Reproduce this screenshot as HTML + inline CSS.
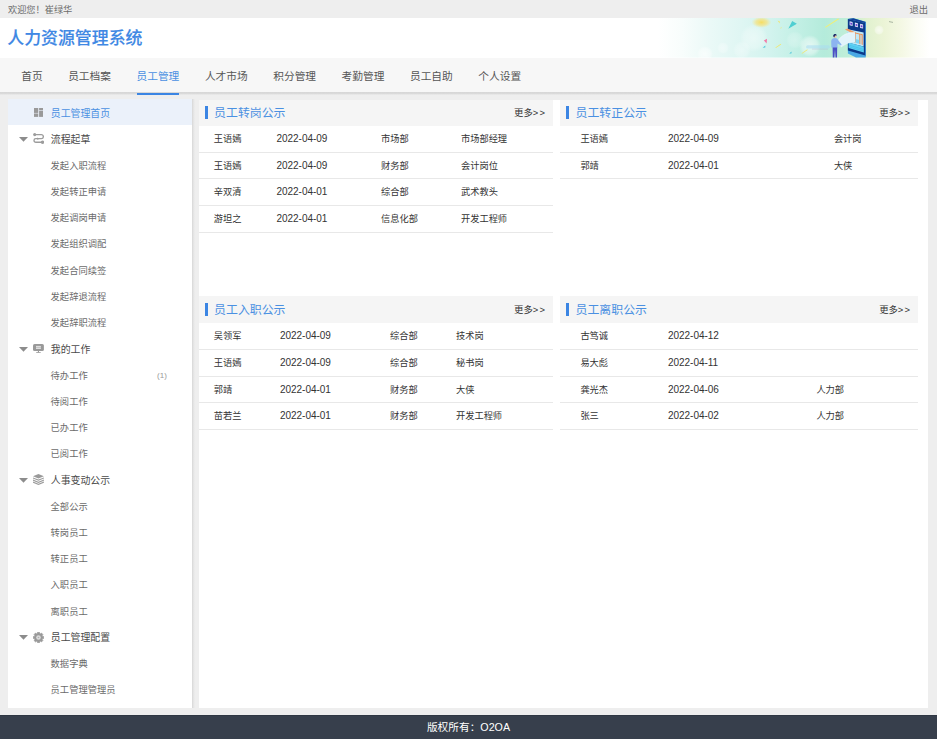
<!DOCTYPE html>
<html lang="zh-CN"><head><meta charset="utf-8"><title>人力资源管理系统</title>
<style>
html,body{margin:0;padding:0}
body{width:937px;height:739px;overflow:hidden;background:#eeeeee;position:relative;font-family:"Liberation Sans", "Noto Sans CJK SC", sans-serif;color:#333}
#top{position:absolute;left:0;top:0;width:937px;height:18px;background:#eeeeee;font-size:9.3px;line-height:18px;color:#6c6c6c}
#top .l{position:absolute;left:8px;top:1.1px;font-size:9.2px}
#top .r{position:absolute;right:9px;top:1.1px}
#hd{position:absolute;left:0;top:18px;width:937px;height:39.6px;background:#fff;overflow:hidden}
#hd .title{position:absolute;left:7.3px;top:0.9px;line-height:39px;font-size:16.9px;font-weight:500;-webkit-text-stroke:0.15px #3f88e4;color:#3f88e4;white-space:nowrap}
#hd svg.bn{position:absolute;left:640px;top:0;width:297px;height:39.6px}
#nav{z-index:2;position:absolute;left:0;top:57.6px;width:937px;height:34.6px;background:#f7f7f7;white-space:nowrap;font-size:10.7px;color:#555}
#nav .ni{display:inline-block;padding:0 12.8px;height:34.6px;line-height:37.2px;vertical-align:top}
#nav .ni b{font-weight:normal;display:inline-block;height:34.6px;box-sizing:border-box;position:relative}
#nav .ni.on{color:#4a90e2}
#nav .ni.on b::after{content:"";position:absolute;left:0;right:0;top:35px;height:2px;background:#3b85e3}
#nav .wrap{position:absolute;left:8.4px;top:0}
#nsh{position:absolute;left:0;top:92.2px;width:937px;height:2.8px;background:linear-gradient(#d6d6d6,#dadada 55%,#eeeeee)}
#side{position:absolute;left:8.3px;top:99.4px;width:183.4px;height:608.6px;background:#fff}
#ssh{position:absolute;left:191.7px;top:99.4px;width:3px;height:608.6px;background:linear-gradient(to right,#d6d6d6,#e2e2e2 38%,#eeeeee)}
.si{position:absolute;left:8.3px;width:183.4px;white-space:nowrap}
.si.h{height:26.23px;line-height:28.93px}
.si.s{height:26.23px;line-height:28.23px}
.si.hbg{background:#ebf1fa}
.si .t{position:absolute;left:42.3px;top:0}
.si .hm{font-size:9.9px;color:#4a90e2;left:42.5px}
.si .hd{font-size:9.9px;color:#4a4a4a;left:42.5px}
.si .sb{font-size:9.28px;color:#6b6b6b}
.si .cnt{position:absolute;left:148.8px;top:0;font-size:8px;color:#999}
.si .icw{position:absolute;left:24.7px;top:1.4px;height:26.23px;width:11px}
.si .ic{position:absolute;left:0}
.si .tri{position:absolute;left:10.8px;top:10.9px;width:9px;height:4.8px}
#ct{position:absolute;left:198.8px;top:99.5px;width:729px;height:608.5px;background:#fff}
.pn{position:absolute}
.ph{position:relative;height:26.4px;background:#f5f5f5;line-height:26.4px}
.ph .bar{position:absolute;left:var(--bl,6.4px);bottom:6.8px;width:2.9px;height:13.4px;background:#3b85e3}
.ph .pt{position:absolute;left:var(--tl,15.7px);bottom:-0.4px;font-size:11.9px;color:#4a90e2}
.ph .more{position:absolute;right:7px;bottom:-0.6px;font-size:9.37px;color:#333}
.ph .more i{font-style:normal;letter-spacing:1.2px}
.row{position:relative;height:26.77px;line-height:26.77px;box-sizing:border-box;border-bottom:1px solid #e8e8e8;font-size:9.22px;color:#333;white-space:nowrap}
.row .c{position:absolute;top:0}
.row .d{font-size:10px;letter-spacing:-0.03px}
#ft{position:absolute;left:0;top:714.7px;width:937px;height:24.3px;box-sizing:border-box;border-top:1px solid #2f3743;background:#373f4c;color:#fff;font-size:10.7px;line-height:23.8px;text-align:center}
</style></head><body>
<div id="top"><span class="l">欢迎您！崔绿华</span><span class="r">退出</span></div>
<div id="hd"><span class="title">人力资源管理系统</span><svg class="bn" viewBox="640 18 297 39.6" preserveAspectRatio="none">
<defs>
<linearGradient id="bg" gradientUnits="userSpaceOnUse" x1="640" x2="937" y1="0" y2="0">
<stop offset="0" stop-color="#ffffff"/>
<stop offset="0.06" stop-color="#ffffff"/>
<stop offset="0.14" stop-color="#f8fdfc"/>
<stop offset="0.24" stop-color="#eaf9f7"/>
<stop offset="0.34" stop-color="#dff6f3"/>
<stop offset="0.44" stop-color="#d2f3ee"/>
<stop offset="0.52" stop-color="#c4f0e6"/>
<stop offset="0.62" stop-color="#b4ebdb"/>
<stop offset="0.70" stop-color="#c0eed8"/>
<stop offset="0.76" stop-color="#e0f1cf"/>
<stop offset="0.82" stop-color="#ebf4d6"/>
<stop offset="0.88" stop-color="#f4f8e4"/>
<stop offset="0.93" stop-color="#fbfcf4"/>
<stop offset="0.975" stop-color="#ffffff"/>
</linearGradient>
<radialGradient id="gw"><stop offset="0" stop-color="#fff" stop-opacity="0.75"/><stop offset="0.7" stop-color="#fff" stop-opacity="0.45"/><stop offset="1" stop-color="#fff" stop-opacity="0"/></radialGradient>
<radialGradient id="gy"><stop offset="0" stop-color="#f7dc5a" stop-opacity="0.95"/><stop offset="0.55" stop-color="#f6e27c" stop-opacity="0.7"/><stop offset="1" stop-color="#f6e890" stop-opacity="0"/></radialGradient>
<filter id="bl" x="-20%" y="-20%" width="140%" height="140%"><feGaussianBlur stdDeviation="0.35"/></filter>
</defs>
<rect x="640" y="18" width="297" height="39.6" fill="url(#bg)"/>
<circle cx="754" cy="38" r="14" fill="url(#gw)" opacity="0.55"/>
<circle cx="705" cy="54" r="8" fill="url(#gw)" opacity="0.8"/>
<circle cx="723" cy="48" r="6" fill="url(#gw)" opacity="0.5"/>
<circle cx="742" cy="50" r="9" fill="url(#gw)" opacity="0.45"/>
<circle cx="810" cy="46" r="11" fill="url(#gw)" opacity="0.8"/>
<circle cx="795" cy="40" r="9" fill="url(#gw)" opacity="0.35"/>
<circle cx="879" cy="30" r="5" fill="url(#gw)" opacity="0.9"/>
<ellipse cx="761.5" cy="22.3" rx="10" ry="5.6" fill="url(#gy)"/>
<g filter="url(#bl)">
<path d="M788.3 28.8L792.2 20.9L796.9 23.7Z" fill="#4fcfd2"/>
<path d="M763.9 40.6L767 38.8L766.6 43.6Z" fill="#f27aa8"/>
<path d="M762.6 47.8L765.3 45.6L765.3 47.6Z" fill="#4ec6dc"/>
<path d="M789.2 53.6L791.6 51.6L791.4 53.4Z" fill="#4ec6dc"/>
<path d="M777.6 20.4L779.6 23.6L779.8 21.4Z" fill="#f4e46a"/>
<path d="M775.3 47.6L780.9 43.8L781.2 44.6L775.9 48.1Z" fill="#f2e76e"/>
<path d="M801.6 53.2L807.3 49.2L807.6 50L802 53.8Z" fill="#f2e76e"/>
<path d="M824.6 27.2L838 18.6L839.4 19L826 27.4Z" fill="#eef07a"/>
<path d="M780.5 28L781.6 26.6L781 29Z" fill="#f2e76e"/>
</g>
<!-- streak glow near person -->
<rect x="806" y="45.2" width="24" height="3.4" rx="1.7" fill="#a9dcf2" opacity="0.55" filter="url(#bl)"/>
<rect x="812" y="48.6" width="16" height="1" fill="#b8a8d8" opacity="0.35"/>
<!-- device -->
<path d="M847.9 19L853.4 18.3L865.6 21.8L865.6 57.6L856 57.6L847.9 53.4Z" fill="#4aa9e4"/>
<path d="M847.9 19.1L865.1 23L865.4 55.4L847.9 50.6Z" fill="#0c3a8a"/>
<path d="M847.9 19.1L853.4 18.3L866 21.9L865.1 23Z" fill="#123f96"/>
<path d="M865.1 23L866 21.9L866 57.6L865.4 55.4Z" fill="#2f7fd0"/>
<path d="M849.6 21.2L852.6 21.9L852.6 26L849.6 25.3Z" fill="#e4e6fb"/>
<path d="M854.9 22.5L857.9 23.2L857.9 27.3L854.9 26.6Z" fill="#e4e6fb"/>
<path d="M860.1 23.8L863.1 24.5L863.1 28.6L860.1 27.9Z" fill="#e4e6fb"/>
<path d="M850.3 22.6L852 23L852 24.8L850.3 24.4Z" fill="#6a3fd0"/>
<path d="M855.6 23.9L857.3 24.3L857.3 26.1L855.6 25.7Z" fill="#6a3fd0"/>
<path d="M860.8 25.2L862.5 25.6L862.5 27.4L860.8 27Z" fill="#6a3fd0"/>
<!-- window light area -->
<path d="M846.6 29L863.6 32.4L863.6 46.4L849.4 43Z" fill="#bfe9f7"/>
<path d="M844.9 29.4L847.4 28.6L855.6 32.6L854.6 34.4Z" fill="#f0a06a"/>
<path d="M854.2 32.2L855.6 32.5L855.6 42.6L854.2 42.2Z" fill="#e9935c"/>
<path d="M854.2 32.2L862.6 34.2L862.6 35.2L854.2 33.2Z" fill="#e9935c"/>
<path d="M859.2 34L860.4 34.3L860.4 44.2L859.2 43.8Z" fill="#e9935c"/>
<path d="M861.6 34.6L862.7 34.8L862.7 45L861.6 44.6Z" fill="#ef8a52"/>
<path d="M855.6 39L859.2 40L859.2 43.8L855.6 42.8Z" fill="#7fd4f2"/>
<!-- keyboard -->
<path d="M848.6 42.4L863.8 46.8L863.8 52.6L848.6 48Z" fill="#5fd1f3"/>
<path d="M848.6 45L863.8 49.6" stroke="#39b6e6" stroke-width="0.5" fill="none"/>
<path d="M848.6 46.6L863.8 51.2" stroke="#39b6e6" stroke-width="0.5" fill="none"/>
<!-- ribbon -->
<path d="M838.2 40.6C842 34.6 848 32.4 855 32.6L855 42C849 42.4 845 44.4 841 47.6Z" fill="#e2f4fb"/>
<path d="M838.2 40.6C842 34.6 848 32.4 855 32.6" stroke="#f4fbff" stroke-width="0.6" fill="none"/>
<!-- person -->
<path d="M832.6 46.8L837.2 46.8L837 57.6L835.5 57.6L835 49.6L834.4 57.6L832.8 57.6Z" fill="#4a4fc4"/>
<path d="M831.2 41.4C831.2 38.8 833 38 834.9 38C836.8 38 838 39 838.4 40.6L841.6 44.4L840.9 45.4L837.6 43.4L837.4 47.4L831.4 47.4Z" fill="#8cb4f0"/>
<circle cx="835" cy="36.2" r="1.55" fill="#f2c6a6"/>
<path d="M833.2 35.8C833.2 33.6 836.8 33.2 836.8 35.6L835.2 35.4L834.2 37.6C833.6 37.2 833.2 36.6 833.2 35.8Z" fill="#1c2a66"/>
<path d="M889 21.6L893 22.4" stroke="#7a8a7a" stroke-width="0.6" fill="none"/>
</svg>
</div>
<div id="nav"><div class="wrap"><span class="ni"><b>首页</b></span><span class="ni"><b>员工档案</b></span><span class="ni on"><b>员工管理</b></span><span class="ni"><b>人才市场</b></span><span class="ni"><b>积分管理</b></span><span class="ni"><b>考勤管理</b></span><span class="ni"><b>员工自助</b></span><span class="ni"><b>个人设置</b></span></div></div>
<div id="nsh"></div>
<div id="side"></div><div id="ssh"></div>
<div class="si hbg" style="top:99.4px;height:25.9px"></div>
<div class="si h" style="top:99.55px"><span class="icw" style="top:1.2px"><svg class="ic" style="left:0.8px;top:7.15px;width:9.4px;height:8.9px" viewBox="0 0 140 130" preserveAspectRatio="none" fill="#999"><rect x="0" y="0" width="63" height="72"/><rect x="0" y="80" width="63" height="50"/><rect x="76" y="0" width="64" height="32"/><rect x="76" y="40" width="64" height="90"/></svg></span><span class="t hm">员工管理首页</span></div>
<div class="si h" style="top:126.08px"><svg class="tri" viewBox="0 0 9 4.8"><path d="M0 0H9L4.5 4.8Z" fill="#8c8c8c"/></svg><span class="icw"><svg class="ic" style="top:5.9px;width:11.2px;height:10.8px" viewBox="0 0 11.2 10.8" fill="none" stroke="#9c9c9c" stroke-width="1.35"><path d="M1.7 1.6H8.3A2.05 2.05 0 0 1 8.3 5.7H2.8A1.8 1.8 0 0 0 2.8 9.3H9.4"/><circle cx="1.7" cy="1.6" r="1.55" fill="#9c9c9c" stroke="none"/><circle cx="9.5" cy="9.2" r="1.7" fill="#9c9c9c" stroke="none"/><path d="M4.3 4.5L6.4 5.7L4.3 6.9Z" fill="#9c9c9c" stroke="none"/></svg></span><span class="t hd">流程起草</span></div>
<div class="si s" style="top:151.71px"><span class="t sb">发起入职流程</span></div>
<div class="si s" style="top:177.94px"><span class="t sb">发起转正申请</span></div>
<div class="si s" style="top:204.17px"><span class="t sb">发起调岗申请</span></div>
<div class="si s" style="top:230.40px"><span class="t sb">发起组织调配</span></div>
<div class="si s" style="top:256.63px"><span class="t sb">发起合同续签</span></div>
<div class="si s" style="top:282.86px"><span class="t sb">发起辞退流程</span></div>
<div class="si s" style="top:309.09px"><span class="t sb">发起辞职流程</span></div>
<div class="si h" style="top:335.92px"><svg class="tri" viewBox="0 0 9 4.8"><path d="M0 0H9L4.5 4.8Z" fill="#8c8c8c"/></svg><span class="icw"><svg class="ic" style="top:6.3px;width:10.9px;height:9px" viewBox="0 0 10.9 9"><rect x="0" y="0" width="10.9" height="7" rx="1.6" fill="#999"/><rect x="3" y="1.9" width="4.9" height="3.1" fill="#dedede"/><rect x="3" y="3.2" width="4.9" height="0.5" fill="#aaa"/><rect x="4.9" y="7" width="1.1" height="1.3" fill="#999"/><rect x="3.2" y="8.1" width="4.5" height="0.8" fill="#999"/></svg></span><span class="t hd">我的工作</span></div>
<div class="si s" style="top:361.55px"><span class="t sb">待办工作</span><span class="cnt">(1)</span></div>
<div class="si s" style="top:387.78px"><span class="t sb">待阅工作</span></div>
<div class="si s" style="top:414.01px"><span class="t sb">已办工作</span></div>
<div class="si s" style="top:440.24px"><span class="t sb">已阅工作</span></div>
<div class="si h" style="top:467.07px"><svg class="tri" viewBox="0 0 9 4.8"><path d="M0 0H9L4.5 4.8Z" fill="#8c8c8c"/></svg><span class="icw"><svg class="ic" style="top:5.8px;width:10.9px;height:11px" viewBox="0 0 10.9 11" fill="#9a9a9a"><path d="M5.45 0L10.9 2.2L5.45 4.4L0 2.2Z"/><path d="M0 3.4L5.45 5.60L10.9 3.4L10.9 4.60L5.45 6.80L0 4.60Z"/><path d="M0 5.5L5.45 7.70L10.9 5.5L10.9 6.70L5.45 8.90L0 6.70Z"/><path d="M0 7.6L5.45 9.80L10.9 7.6L10.9 8.80L5.45 11.00L0 8.80Z"/></svg></span><span class="t hd">人事变动公示</span></div>
<div class="si s" style="top:492.70px"><span class="t sb">全部公示</span></div>
<div class="si s" style="top:518.93px"><span class="t sb">转岗员工</span></div>
<div class="si s" style="top:545.16px"><span class="t sb">转正员工</span></div>
<div class="si s" style="top:571.39px"><span class="t sb">入职员工</span></div>
<div class="si s" style="top:597.62px"><span class="t sb">离职员工</span></div>
<div class="si h" style="top:624.45px"><svg class="tri" viewBox="0 0 9 4.8"><path d="M0 0H9L4.5 4.8Z" fill="#8c8c8c"/></svg><span class="icw"><svg class="ic" style="top:5.8px;width:11px;height:11px" viewBox="0 0 11 11"><path d="M4.42 1.29L4.49 0.25L6.51 0.25L6.58 1.29L7.72 1.76L8.50 1.07L9.93 2.50L9.24 3.28L9.71 4.42L10.75 4.49L10.75 6.51L9.71 6.58L9.24 7.72L9.93 8.50L8.50 9.93L7.72 9.24L6.58 9.71L6.51 10.75L4.49 10.75L4.42 9.71L3.28 9.24L2.50 9.93L1.07 8.50L1.76 7.72L1.29 6.58L0.25 6.51L0.25 4.49L1.29 4.42L1.76 3.28L1.07 2.50L2.50 1.07L3.28 1.76Z" fill="#999" stroke="#999" stroke-width="0.6" stroke-linejoin="round"/><circle cx="5.5" cy="5.5" r="2.3" fill="#dcdcdc"/><circle cx="5.5" cy="5.5" r="0.8" fill="#b0b0b0"/></svg></span><span class="t hd">员工管理配置</span></div>
<div class="si s" style="top:650.08px"><span class="t sb">数据字典</span></div>
<div class="si s" style="top:676.31px"><span class="t sb">员工管理管理员</span></div>
<div id="ct"></div>
<div class="pn" style="--bl:6px;--tl:15.3px;left:198.8px;top:99.7px;width:354.3px">
<div class="ph" style="height:26.10px"><span class="bar"></span><span class="pt">员工转岗公示</span><span class="more">更多<i>&gt;&gt;</i></span></div>
<div class="row">
<span class="c" style="left:15.0px">王语嫣</span>
<span class="c d" style="left:77.7px">2022-04-09</span>
<span class="c" style="left:182.2px">市场部</span>
<span class="c" style="left:262.2px">市场部经理</span>
</div>
<div class="row">
<span class="c" style="left:15.0px">王语嫣</span>
<span class="c d" style="left:77.7px">2022-04-09</span>
<span class="c" style="left:182.2px">财务部</span>
<span class="c" style="left:262.2px">会计岗位</span>
</div>
<div class="row">
<span class="c" style="left:15.0px">辛双清</span>
<span class="c d" style="left:77.7px">2022-04-01</span>
<span class="c" style="left:182.2px">综合部</span>
<span class="c" style="left:262.2px">武术教头</span>
</div>
<div class="row">
<span class="c" style="left:15.0px">游坦之</span>
<span class="c d" style="left:77.7px">2022-04-01</span>
<span class="c" style="left:182.2px">信息化部</span>
<span class="c" style="left:262.2px">开发工程师</span>
</div>
</div><div class="pn" style="left:559.9px;top:99.7px;width:358.3px">
<div class="ph" style="height:26.10px"><span class="bar"></span><span class="pt">员工转正公示</span><span class="more">更多<i>&gt;&gt;</i></span></div>
<div class="row">
<span class="c" style="left:20.5px">王语嫣</span>
<span class="c d" style="left:108.1px">2022-04-09</span>
<span class="c" style="left:274px">会计岗</span>
</div>
<div class="row">
<span class="c" style="left:20.5px">郭靖</span>
<span class="c d" style="left:108.1px">2022-04-01</span>
<span class="c" style="left:274px">大侠</span>
</div>
</div><div class="pn" style="--bl:6px;--tl:15.3px;left:198.8px;top:295.9px;width:354.3px">
<div class="ph" style="height:27.25px"><span class="bar"></span><span class="pt">员工入职公示</span><span class="more">更多<i>&gt;&gt;</i></span></div>
<div class="row">
<span class="c" style="left:15.0px">吴领军</span>
<span class="c d" style="left:81.2px">2022-04-09</span>
<span class="c" style="left:191.2px">综合部</span>
<span class="c" style="left:257.2px">技术岗</span>
</div>
<div class="row">
<span class="c" style="left:15.0px">王语嫣</span>
<span class="c d" style="left:81.2px">2022-04-09</span>
<span class="c" style="left:191.2px">综合部</span>
<span class="c" style="left:257.2px">秘书岗</span>
</div>
<div class="row">
<span class="c" style="left:15.0px">郭靖</span>
<span class="c d" style="left:81.2px">2022-04-01</span>
<span class="c" style="left:191.2px">财务部</span>
<span class="c" style="left:257.2px">大侠</span>
</div>
<div class="row">
<span class="c" style="left:15.0px">苗若兰</span>
<span class="c d" style="left:81.2px">2022-04-01</span>
<span class="c" style="left:191.2px">财务部</span>
<span class="c" style="left:257.2px">开发工程师</span>
</div>
</div><div class="pn" style="left:559.9px;top:295.9px;width:358.3px">
<div class="ph" style="height:27.25px"><span class="bar"></span><span class="pt">员工离职公示</span><span class="more">更多<i>&gt;&gt;</i></span></div>
<div class="row">
<span class="c" style="left:20.5px">古笃诚</span>
<span class="c d" style="left:108.1px">2022-04-12</span>
</div>
<div class="row">
<span class="c" style="left:20.5px">易大彪</span>
<span class="c d" style="left:108.1px">2022-04-11</span>
</div>
<div class="row">
<span class="c" style="left:20.5px">龚光杰</span>
<span class="c d" style="left:108.1px">2022-04-06</span>
<span class="c" style="left:256.5px">人力部</span>
</div>
<div class="row">
<span class="c" style="left:20.5px">张三</span>
<span class="c d" style="left:108.1px">2022-04-02</span>
<span class="c" style="left:256.5px">人力部</span>
</div>
</div>
<div id="ft">版权所有：O2OA</div>
</body></html>
